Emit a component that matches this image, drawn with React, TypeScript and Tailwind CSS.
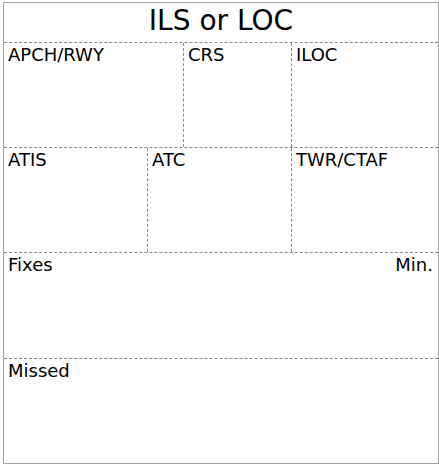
import React from "react";

const font = { fontFamily: '"DejaVu Sans", Verdana, sans-serif' };

function Cell({ label, className = "", right }: { label: string; className?: string; right?: string }) {
  return (
    <div className={`flex justify-between pl-[4px] pr-[5px] pt-[2px] text-[18px] leading-[20px] text-black ${className}`}>
      <span>{label}</span>
      {right ? <span>{right}</span> : null}
    </div>
  );
}

export default function App() {
  return (
    <div className="bg-white w-[439px] h-[465px] pt-[2px] pl-[3px]" style={font}>
      <div className="w-[436px] h-[462px] border border-[#a3a3a3] flex flex-col bg-white">
        <div className="h-[40px] pt-[2px] text-center text-[28px] leading-[32px] text-black border-b border-dashed border-[#8a8a8a]">
          ILS or LOC
        </div>
        <div className="flex h-[105px] border-b border-dashed border-[#8a8a8a]">
          <Cell label="APCH/RWY" className="w-[180px] border-r border-dashed border-[#8a8a8a]" />
          <Cell label="CRS" className="w-[108px] border-r border-dashed border-[#8a8a8a]" />
          <Cell label="ILOC" className="flex-1" />
        </div>
        <div className="flex h-[105px] border-b border-dashed border-[#8a8a8a]">
          <Cell label="ATIS" className="w-[144px] border-r border-dashed border-[#8a8a8a]" />
          <Cell label="ATC" className="w-[144px] border-r border-dashed border-[#8a8a8a]" />
          <Cell label="TWR/CTAF" className="flex-1" />
        </div>
        <div className="flex h-[106px] border-b border-dashed border-[#8a8a8a]">
          <Cell label="Fixes" right="Min." className="flex-1" />
        </div>
        <div className="flex flex-1">
          <Cell label="Missed" className="flex-1" />
        </div>
      </div>
    </div>
  );
}
